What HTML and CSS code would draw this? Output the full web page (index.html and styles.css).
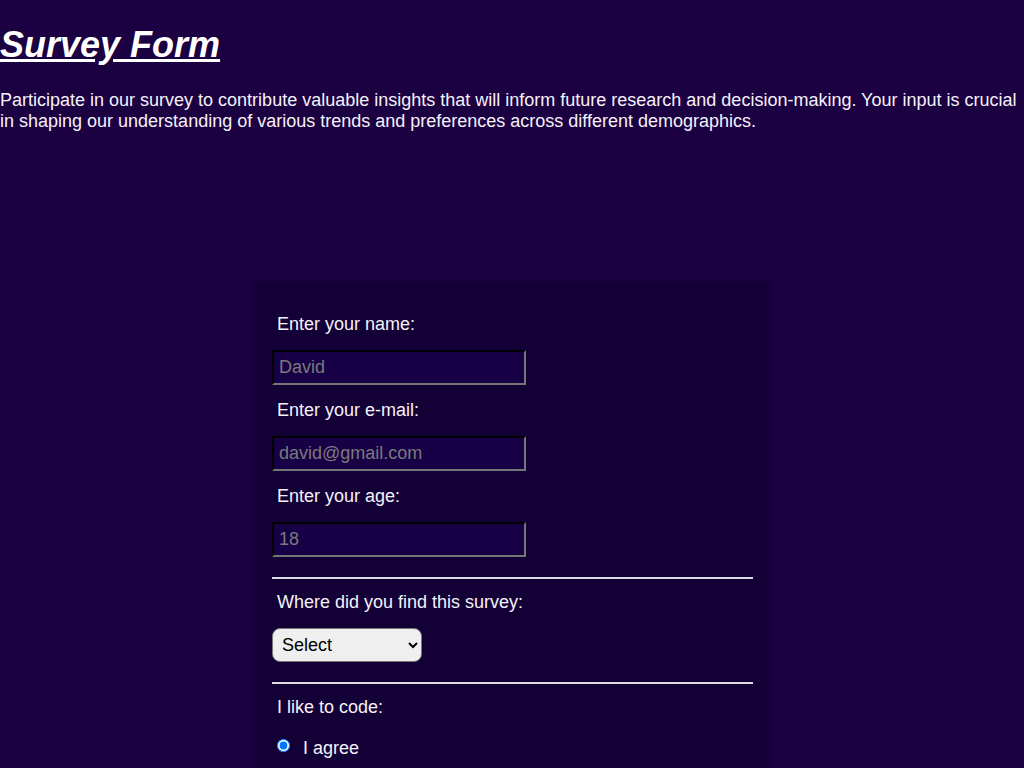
FILE: index.html
```html
<!DOCTYPE html>
<html lang="en">
<head>
<meta charset="utf-8">
<title>Survey Form</title>
<link rel="stylesheet" href="styles.css">
</head>
<body>
  <h1 class="title">Survey Form</h1>
  <p class="intro">Participate in our survey to contribute valuable insights that will inform future research and decision-making. Your input is crucial in shaping our understanding of various trends and preferences across different demographics.</p>
  <form class="survey">
    <label class="field-label" for="name">Enter your name:</label>
    <input class="text-input" id="name" type="text" placeholder="David">
    <label class="field-label" for="email">Enter your e-mail:</label>
    <input class="text-input" id="email" type="email" placeholder="david@gmail.com">
    <label class="field-label" for="age">Enter your age:</label>
    <input class="text-input last" id="age" type="number" placeholder="18">
    <hr class="divider">
    <label class="field-label" for="source">Where did you find this survey:</label>
    <select class="select-input" id="source">
      <option>Select</option>
      <option>Friends</option>
      <option>Social media</option>
      <option>Other</option>
    </select>
    <hr class="divider second">
    <label class="field-label">I like to code:</label>
    <div class="radio-row">
      <input class="radio" type="radio" id="agree" name="code" checked> <label class="radio-label" for="agree">I agree</label>
    </div>
  </form>
</body>
</html>
```

FILE: styles.css
```css
html, body {
  margin: 0;
  padding: 0;
}

body {
  background: #1b0042;
  color: #f4f2f8;
  font-family: "Liberation Sans", Arial, sans-serif;
  font-size: 18px;
}

.title {
  font-size: 36px;
  font-weight: bold;
  font-style: italic;
  text-decoration: underline;
  color: #ffffff;
  margin: 24px 0;
}

.intro {
  margin: 24px 0 18px;
  line-height: 21px;
}

.survey {
  width: 512px;
  box-sizing: border-box;
  margin: 151px auto 0;
  padding: 16px 15px 40px 16px;
  background: #130036;
  box-shadow: 0 0 4px rgba(10, 0, 30, 0.6);
}

.field-label {
  display: block;
  padding: 0 5px;
  margin: 15px 0;
  line-height: 21px;
}

.text-input {
  display: block;
  box-sizing: border-box;
  width: 254px;
  height: 35px;
  padding: 0 5px;
  margin: 0;
  font-family: "Liberation Sans", Arial, sans-serif;
  font-size: 18px;
  color: #dddddd;
  background: #170046;
  border: 2px inset #767676;
  border-top-color: #2a2a2a;
  border-left-color: #2a2a2a;
}

.text-input::placeholder {
  color: #7a7a7a;
}

.text-input.last {
  margin-bottom: 20px;
}

.divider {
  border: none;
  border-top: 2px solid #dcdae4;
  margin: 0 0 -2px;
  height: 0;
}

.divider.second {
  margin-bottom: -2px;
}

.select-input {
  display: block;
  box-sizing: border-box;
  width: 150px;
  height: 34px;
  padding: 0 4px 0 5px;
  margin: 0 0 20px;
  font-family: "Liberation Sans", Arial, sans-serif;
  font-size: 18px;
  color: #000;
  background-color: #efefef;
  border: 1px solid #767676;
  border-radius: 8px;
}

.radio-row {
  margin-top: -15px;
  padding-top: 20px;
  line-height: 21px;
}

.radio {
  margin: 1px 3px 0 5px;
  vertical-align: top;
  accent-color: #0075ff;
}

.radio-label {
  padding: 0 5px;
}
```
